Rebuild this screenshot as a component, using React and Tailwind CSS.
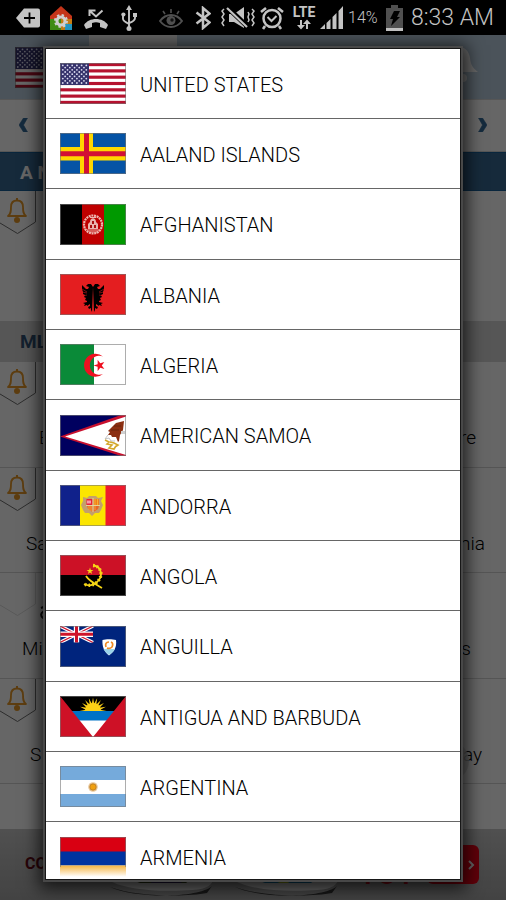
import React from "react";

const STAR = "M0,-1 L0.225,-0.309 L0.951,-0.309 L0.363,0.118 L0.588,0.809 L0,0.382 L-0.588,0.809 L-0.363,0.118 L-0.951,-0.309 L-0.225,-0.309 Z";

function Frame({ children }) {
  return (
    <svg viewBox="0 0 66 41" className="h-[41px] w-[66px] shrink-0" preserveAspectRatio="none" aria-hidden="true">
      {children}
      <rect x="0.5" y="0.5" width="65" height="40" fill="none" stroke="#777" strokeOpacity="0.6" />
    </svg>
  );
}

function UnitedStates() {
  const stars = [];
  for (let r = 0; r < 9; r++) {
    for (let c = 0; c < (r % 2 ? 5 : 6); c++) {
      stars.push(<circle key={r + "-" + c} cx={2.8 + c * 4.7 + (r % 2 ? 2.35 : 0)} cy={2.4 + r * 2.2} r="0.9" fill="#dcdcf0" />);
    }
  }
  return (
    <Frame>
      <rect width="66" height="41" fill="#fff" />
      {[0, 2, 4, 6, 8, 10, 12].map((i) => (
        <rect key={i} y={(i * 41) / 13} width="66" height={41 / 13} fill="#b5122f" />
      ))}
      <rect width="29" height="22" fill="#35326b" />
      {stars}
    </Frame>
  );
}

function Aland() {
  return (
    <Frame>
      <rect width="66" height="41" fill="#0553a5" />
      <path d="M20 0h13v41H20zM0 14h66v13.500H0z" fill="#ffd700" />
      <path d="M24 0h5v41h-5zM0 18.200h66v5H0z" fill="#d21034" />
    </Frame>
  );
}

function Afghanistan() {
  return (
    <Frame>
      <rect width="22" height="41" fill="#000" />
      <rect x="22" width="22" height="41" fill="#bf0000" />
      <rect x="44" width="22" height="41" fill="#009900" />
      <circle cx="33" cy="20.500" r="9" fill="none" stroke="#eeb6b0" strokeWidth="2.200" strokeDasharray="2 0.700" />
      <path d="M28 25v-5l2-2c0-5 6-5 6 0l2 2v5z" fill="#e9b4ad" />
      <path d="M30 24v-3h2v3zM34 24v-3h2v3zM32 17h2v3h-2z" fill="#a8100e" />
      <path d="M27 26h12M29 28h8M30 13.500h6" stroke="#eeb6b0" strokeWidth="1.200" />
    </Frame>
  );
}

function Albania() {
  const half = "M33 13l-2-3-3 0-2 2 3 1-1 2-2 0-4-4 0 4 1 3 0 2 2 1-1 2 2 1-1 2 2 1 0 1-4 1 2 1-1 2 3-1 0 1 3-2 0 2-2 1 1 2 2-1 0 2 1 2z";
  return (
    <Frame>
      <rect width="66" height="41" fill="#e41e20" />
      <path d={half} fill="#000" />
      <path d={half} fill="#000" transform="translate(66 0) scale(-1 1)" />
      <path d="M22 15l5 3M22 18l5 1M23 22l4-1M44 15l-5 3M44 18l-5 1M43 22l-4-1" stroke="#e41e20" strokeWidth="0.500" />
    </Frame>
  );
}

function Algeria() {
  return (
    <Frame>
      <rect width="66" height="41" fill="#fff" />
      <rect width="34" height="41" fill="#0a8a38" />
      <path d="M43 12.500A11.500 11.500 0 1 0 43 30A9.500 9.500 0 1 1 43 12.500z" fill="#ee1020" />
      <path d={STAR} transform="translate(39.500 21.500) rotate(-90) scale(6)" fill="#ee1020" />
    </Frame>
  );
}

function AmericanSamoa() {
  return (
    <Frame>
      <rect width="66" height="41" fill="#00005f" />
      <path d="M0 21.500L61 0h5v41h-5z" fill="#c8102e" />
      <path d="M5 21.500L66 1.500v38.500z" fill="#fff" />
      <path d="M64 6l-8 2-4 4-4 4 2 1-2 3 3 0 1 2 4 0 2 5 1-1 1-6 3-5z" fill="#8b2f12" />
      <path d="M54 11l7 0M51 15l8 0" stroke="#5f210c" strokeWidth="0.800" />
      <path d="M48 20l-3 4 4-1 2 3 4 0" fill="none" stroke="#bbb" strokeWidth="0.900" />
      <path d="M45 25l4 2-2 2 5 1-3 3 5 1 2-3M50 27l4 1 4 2-3 2" fill="none" stroke="#d4a72a" strokeWidth="1.600" />
      <path d="M61 16h4v3h-4z" fill="#d0d0d0" />
    </Frame>
  );
}

function Andorra() {
  return (
    <Frame>
      <rect width="66" height="41" fill="#10218b" />
      <rect x="20" width="26" height="41" fill="#fbe500" />
      <rect x="45.500" width="20.500" height="41" fill="#ef1a2d" />
      <path d="M23 12l4 1 2-2h7l2 2 5-1-2 4 2 4-2 5-2 3-4 0-3 3-3-3-4 0-2-3-2-5 2-4z" fill="#c3a06c" />
      <rect x="26.500" y="14" width="6" height="6" fill="#e8203a" />
      <path d="M28 15.500v3M30 15.500v3" stroke="#fff" strokeWidth="1.100" />
      <rect x="33.500" y="14" width="5.500" height="6" fill="#ef7d1c" />
      <path d="M27 21h5.500v6L28 24zM33.500 21H39l-1 3-4.500 3z" fill="#e9652a" />
      <path d="M26 20.500h14M33 13v14" stroke="#e8d9a0" strokeWidth="0.900" />
      <path d="M35 14v6M37.500 14v6M29 21v4M31 21v5M35 21v4" stroke="#fbd23c" strokeWidth="0.600" />
    </Frame>
  );
}

function Angola() {
  return (
    <Frame>
      <rect width="66" height="20.500" fill="#cc1126" />
      <rect y="20" width="66" height="21" fill="#000" />
      <path d="M33 10.500C41 11 43.500 20 38 26C34 31 28 31 24 29" fill="none" stroke="#f6d616" strokeWidth="1.800" />
      <path d="M33 10.500C41 11 43.500 20 38 26C34 31 28 31 24 29" fill="none" stroke="#f6d616" strokeWidth="3.400" strokeDasharray="1.500 2.200" />
      <path d="M26 21c3 5 9 8 16 12" fill="none" stroke="#f6d616" strokeWidth="1.800" />
      <path d={STAR} transform="translate(30 16) scale(3.600)" fill="#f6d616" />
    </Frame>
  );
}

function Anguilla() {
  return (
    <Frame>
      <rect width="66" height="41" fill="#00247d" />
      <path d="M0 0l33 16.500M33 0L0 16.500" stroke="#fff" strokeWidth="3.600" />
      <path d="M0 0l33 16.500M33 0L0 16.500" stroke="#cf142b" strokeWidth="1.200" />
      <path d="M16.500 0v16.500M0 8.200h33" stroke="#fff" strokeWidth="5.400" />
      <path d="M16.500 0v16.500M0 8.200h33" stroke="#cf142b" strokeWidth="3" />
      <path d="M0 16.700h34V41H0z" fill="#00247d" />
      <path d="M42.500 14c3-1 10-1 13.500 0 1 7-2 12-7 15.500-5-4-7-9-6.500-15.500z" fill="#fff" />
      <path d="M43.500 23h11.500c-1 2-3 4-6 6-3-2-4.500-4-5.500-6z" fill="#9bd4ea" />
      <path d="M46 21c-1-3 0-5 3-5M51 16c2 1 2 3 1 5M47 22c2 1 4 0 5-1" fill="none" stroke="#f08a22" strokeWidth="1.700" />
    </Frame>
  );
}

function Antigua() {
  const rays = [];
  for (let i = 0; i <= 10; i++) {
    const a = Math.PI + (i * Math.PI) / 10;
    const p = (r, t) => (33 + r * Math.cos(t)).toFixed(2) + "," + (15 + r * Math.sin(t)).toFixed(2);
    rays.push(<polygon key={i} points={p(7, a - 0.17) + " " + p(13.5, a) + " " + p(7, a + 0.17)} fill="#fcd116" />);
  }
  return (
    <Frame>
      <rect width="66" height="41" fill="#000" />
      {rays}
      <circle cx="33" cy="15" r="8" fill="#fcd116" />
      <rect y="15" width="66" height="10" fill="#0072c6" />
      <rect y="24.500" width="66" height="17" fill="#fff" />
      <path d="M0 0l33 41H0zM66 0L33 41h33z" fill="#ce1126" />
    </Frame>
  );
}

function Argentina() {
  return (
    <Frame>
      <rect width="66" height="41" fill="#75aadb" />
      <rect y="14" width="66" height="14" fill="#fff" />
      <circle cx="33" cy="21" r="4.800" fill="#e8c79a" />
      <circle cx="33" cy="21" r="3.200" fill="#f0a010" stroke="#b77a25" strokeWidth="0.800" />
    </Frame>
  );
}

function Armenia() {
  return (
    <svg viewBox="0 0 66 41" className="h-[41px] w-[66px] shrink-0" aria-hidden="true">
      <defs>
        <linearGradient id="fade" x1="0" y1="0" x2="0" y2="1">
          <stop offset="0" stopColor="#f5b340" />
          <stop offset="0.9" stopColor="#fff" />
        </linearGradient>
      </defs>
      <rect width="66" height="15" fill="#d90012" />
      <rect y="14.500" width="66" height="14" fill="#0033a0" />
      <rect y="28.500" width="66" height="12.500" fill="url(#fade)" />
      <path d="M0.500 30V0.500h65V30" fill="none" stroke="#777" strokeOpacity="0.600" />
    </svg>
  );
}

const COUNTRIES = [
  ["UNITED STATES", UnitedStates],
  ["AALAND ISLANDS", Aland],
  ["AFGHANISTAN", Afghanistan],
  ["ALBANIA", Albania],
  ["ALGERIA", Algeria],
  ["AMERICAN SAMOA", AmericanSamoa],
  ["ANDORRA", Andorra],
  ["ANGOLA", Angola],
  ["ANGUILLA", Anguilla],
  ["ANTIGUA AND BARBUDA", Antigua],
  ["ARGENTINA", Argentina],
  ["ARMENIA", Armenia],
];

function StatusBar() {
  return (
    <header className="flex h-[35px] items-center bg-black pr-3 pl-4 text-[#c4c4c4]">
      <svg className="h-5 w-6 shrink-0" viewBox="0 0 24 20" aria-hidden="true">
        <path d="M8 0.500h14q2 0 2 2v15q0 2-2 2H8L0 10z" fill="currentColor" />
        <path d="M13.500 4.500v11M8 10h11" stroke="#000" strokeWidth="1.800" />
      </svg>
      <svg className="ml-2.5 h-[26px] w-[22px] shrink-0" viewBox="0 0 22 26" aria-hidden="true">
        <path d="M0 12h11v13H0z" fill="#3f8c14" />
        <path d="M11 12h11v13H11z" fill="#c57d14" />
        <path d="M15 19h7v6h-7z" fill="#2497c0" />
        <path d="M11 1l11 10v3H0v-3z" fill="#c43419" />
        <circle cx="11" cy="16" r="4" fill="none" stroke="#d0d0d0" strokeWidth="3" />
        <circle cx="11" cy="16" r="6" fill="none" stroke="#d0d0d0" strokeWidth="2" strokeDasharray="2.400 2.300" />
      </svg>
      <svg className="ml-3 h-[26px] w-6 shrink-0" viewBox="0 0 24 26" aria-hidden="true">
        <path d="M0 20c5-8 19-8 24 0l-2 4-6-2v-4c-3-1-5-1-8 0v4l-6 2z" fill="currentColor" />
        <path d="M18.500 5.500L12 11.500 6.500 6.500M5.500 11V5.500h6" fill="none" stroke="currentColor" strokeWidth="2" />
      </svg>
      <svg className="ml-[13px] h-[26px] w-4 shrink-0" viewBox="0 0 16 26" aria-hidden="true">
        <path d="M8 3v20M2 9v5q0 2 6 5M14 10v3q0 3-6 5" fill="none" stroke="currentColor" strokeWidth="1.900" />
        <path d="M8 0l3 5H5z" fill="currentColor" />
        <circle cx="8" cy="23.500" r="2.500" fill="currentColor" />
        <circle cx="2.400" cy="9.500" r="2.100" fill="currentColor" />
        <path d="M12 8h4v4h-4z" fill="currentColor" />
      </svg>
      <svg className="ml-[22px] h-5 w-6 shrink-0 text-[#505050]" viewBox="0 0 24 20" aria-hidden="true">
        <path d="M1 13c6-8 16-8 22 0-6 8-16 8-22 0z" fill="none" stroke="currentColor" strokeWidth="2" />
        <circle cx="12" cy="12.500" r="4.500" fill="currentColor" />
        <circle cx="13" cy="12" r="1.700" fill="#111" />
        <path d="M12 5V1M6 6L4 3M18 6l2-3" stroke="currentColor" strokeWidth="1.600" />
      </svg>
      <svg className="ml-3 h-6 w-4 shrink-0" viewBox="0 0 16 24" aria-hidden="true">
        <path d="M1.500 6.500l13 10L8 22V2l6.500 5.500-13 10" fill="none" stroke="currentColor" strokeWidth="2.500" />
      </svg>
      <svg className="ml-2.5 h-[22px] w-[35px] shrink-0" viewBox="0 0 35 22" aria-hidden="true">
        <path d="M8 7h5l10-7v21l-10-6H8z" fill="currentColor" />
        <path d="M7 1l21 20" stroke="#000" strokeWidth="5" />
        <path d="M6 1l20 19" stroke="currentColor" strokeWidth="2.200" />
        <path d="M3 2l-2 2 2 3-2 3 2 3-2 3 2 3M31 2l2 2-2 3 2 3-2 3 2 3-2 3M27 5l1 2-1 3 1 3-1 2" fill="none" stroke="currentColor" strokeWidth="1.500" />
      </svg>
      <svg className="ml-1 h-6 w-6 shrink-0" viewBox="0 0 24 24" fill="none" stroke="currentColor" aria-hidden="true">
        <circle cx="12" cy="12.500" r="8.500" strokeWidth="2.500" />
        <path d="M7.500 11l4 4 5-5" strokeWidth="2" />
        <path d="M1 6l5-4M23 6l-5-4M5 20l-2 3M19 20l2 3" strokeWidth="2.600" />
      </svg>
      <div className="ml-2 flex w-6 shrink-0 flex-col items-center">
        <span className="text-[14px] leading-[13px] font-bold">LTE</span>
        <svg className="h-[11px] w-[14px]" viewBox="0 0 14 11" aria-hidden="true">
          <path d="M4 1v7M10 10V3" stroke="currentColor" strokeWidth="2" />
          <path d="M0 6h8l-4 4.500zM6 5h8l-4-4.500z" fill="currentColor" />
        </svg>
      </div>
      <svg className="ml-1 h-[23px] w-6 shrink-0" viewBox="0 0 24 23" fill="currentColor" aria-hidden="true">
        <path d="M0 23l5-5v5zM6.500 17l4-4v10h-4zM12.500 11l4-4v16h-4zM18.500 5L23 0v23h-4.500z" />
      </svg>
      <span className="ml-1 text-[16px] leading-5 font-light">14%</span>
      <svg className="ml-auto h-[26px] w-[17px] shrink-0" viewBox="0 0 17 26" aria-hidden="true">
        <path d="M5 0h7v3h5v23H0V3h5z" fill="#505050" />
        <path d="M0 23h17v3H0z" fill="#c4c4c4" />
        <path d="M8 6h6l-3 6h3l-9 9 2-7H4z" fill="#000" />
      </svg>
      <time className="ml-2 text-[23px] leading-7 font-light">8:33 AM</time>
    </header>
  );
}

function BellTag({ faint }) {
  return (
    <svg className="h-11 w-9 shrink-0" viewBox="0 0 36 44" fill="none" aria-hidden="true">
      <path d="M35.500 0v31L17.500 42.500 0 32" stroke={faint ? "#dedede" : "#707070"} />
      {!faint && (
        <g>
          <path d="M8 25c3-2 3-5 3-9 0-4 2-6.500 6-6.500s6 2.500 6 6.500c0 4 0 7 3 9z" stroke="#e89a28" strokeWidth="1.800" strokeLinejoin="round" />
          <path d="M17 9V7" stroke="#e89a28" strokeWidth="2" />
          <circle cx="17" cy="29" r="3" fill="#e89a28" />
        </g>
      )}
    </svg>
  );
}

function Match({ home, away, className, faint, children }) {
  return (
    <article className="relative h-[106px] border-b border-[#d4d4d4] even:h-[105px]">
      <BellTag faint={faint} />
      {children}
      <div className={"mt-5 flex justify-between text-[19px] leading-6 font-light " + className}>
        <span>{home}</span>
        <span>{away}</span>
      </div>
    </article>
  );
}

function Scores() {
  return (
    <main className="bg-white text-black">
      <div className="flex h-16 bg-[#bbd0e2]">
        <div className="w-[89px] shrink-0 pt-3 pl-[15px]"><UnitedStates /></div>
        <div className="w-[88px] bg-[#fafafa]" />
        <svg className="mt-3 mr-7 ml-auto h-[37px] w-10" viewBox="0 0 40 37" fill="#fff" aria-hidden="true">
          <path d="M2 25c6-3 6-8 7-14C10 3 14 0 20 0s11 3 12 11c1 7 2 9 8 14z" />
          <circle cx="25" cy="31" r="4" />
        </svg>
      </div>
      <div className="flex h-[53px] items-start justify-between border-y border-[#d8d8d8] px-[19px] pt-[18px]">
        {["M8.500 0h-4L0 7l4.500 7h4L4.500 7z", "M1.500 0h4L10 7l-4.500 7h-4L5.500 7z"].map((d, i) => (
          <button key={d} aria-label={i ? "Next day" : "Previous day"}>
            <svg className="h-3.5 w-2.5" viewBox="0 0 10 14" fill="#336a99" stroke="#336a99" strokeWidth="0.600"><path d={d} /></svg>
          </button>
        ))}
      </div>
      <h1 className="h-[39px] border-y border-[#176099] bg-[#376a93] pl-5 text-[19px] leading-[39px] font-bold">
        <span className="text-white">A N</span>
      </h1>
      <div className="h-[130px]"><BellTag /></div>
      <h2 className="h-[41px] bg-[#d6d6d6] pl-5 text-[19px] leading-[42px] font-bold text-[#315174]">ML</h2>
      <section>
        <Match home="B" away="re" className="pr-[30px] pl-[39px]" />
        <Match home="Sa" away="hia" className="pr-[21px] pl-[26px]" />
        <Match home="Mi" away="s" className="pr-[35px] pl-[22px]" faint>
          <svg className="absolute top-[30px] left-[38px] h-[19px] w-3" viewBox="0 0 12 19" fill="none" stroke="#151515" strokeWidth="2" aria-hidden="true">
            <path d="M11 8C1 6 0 17 11 16M3 5l5-2" />
          </svg>
        </Match>
        <Match home="S" away="ay" className="pr-[24px] pl-[30px]">
          <span className="absolute top-[62px] right-[37px] size-10 rounded-full bg-[#d8d8d8]/80" />
        </Match>
      </section>
      <div className="h-[45px] overflow-hidden" />
      <aside className="relative flex h-[71px] overflow-hidden bg-[#b8b8b8] bg-linear-to-b from-[#c8c8c8] to-[#a8a8a8] pr-[27px] pl-[25px]">
        <span className="mt-[27px] text-[16px] leading-4 font-bold text-[#650c17]">CO</span>
        <svg className="absolute bottom-0 left-[100px] h-[30px] w-[250px]" viewBox="0 0 250 30" aria-hidden="true">
          {[0, 125].map((x, i) => (
            <g key={x} transform={"translate(" + x + " 0)"}>
              <path d="M10 17c25 12 90 11 102-1l-5 7c-20 4-70 4-97-6z" fill="#3a3a3a" />
              <path d="M5 8h108c0 7-6 11-20 12-30 2-70 1-88-12z" fill="#f4f4f4" />
              <path d="M24 7h70l-8 6H40z" fill={i ? "#138bc0" : "#3d4a20"} />
              <path d="M40 7l15 6h8l8-6z" fill="#c8df26" />
              {!i && <path d="M55 7l-4 6h30l4-6z" fill="#32235f" />}
            </g>
          ))}
        </svg>
        <span className="mt-[29px] ml-auto text-[30px] leading-8 font-medium text-[#dc1021]">TOY</span>
        <button aria-label="Open advertisement" className="mt-4 ml-3 flex h-[39px] w-[52px] items-center justify-end rounded-md bg-[#f00018] pr-1">
          <svg className="h-3 w-2" viewBox="0 0 8 12" fill="none" stroke="#fff" strokeWidth="2" aria-hidden="true"><path d="M2 2l4 4-4 4" /></svg>
        </button>
      </aside>
    </main>
  );
}

export default function App() {
  return (
    <div className="relative overflow-hidden font-['Roboto','Noto_Sans',sans-serif]">
      <StatusBar />
      <Scores />
      <div className="absolute inset-x-0 top-[35px] bottom-0 bg-black/60 px-[45px] pt-[13px] pb-5">
        <div role="dialog" aria-label="Choose a country" className="h-full overflow-hidden border border-[#171717] bg-white shadow-[0_0_0_2px_#484848,0_3px_16px_6px_rgba(0,0,0,0.7)]">
          <ul>
            {COUNTRIES.map(([name, Flag]) => (
              <li key={name} className="h-[70px] border-b border-[#666] nth-[3n]:h-[71px]">
                <button className="flex h-full w-full items-center gap-3.5 pl-3.5 text-left text-[20px] leading-6 font-light text-black">
                  <Flag />
                  <span className="pt-0.5">{name}</span>
                </button>
              </li>
            ))}
          </ul>
        </div>
      </div>
    </div>
  );
}
